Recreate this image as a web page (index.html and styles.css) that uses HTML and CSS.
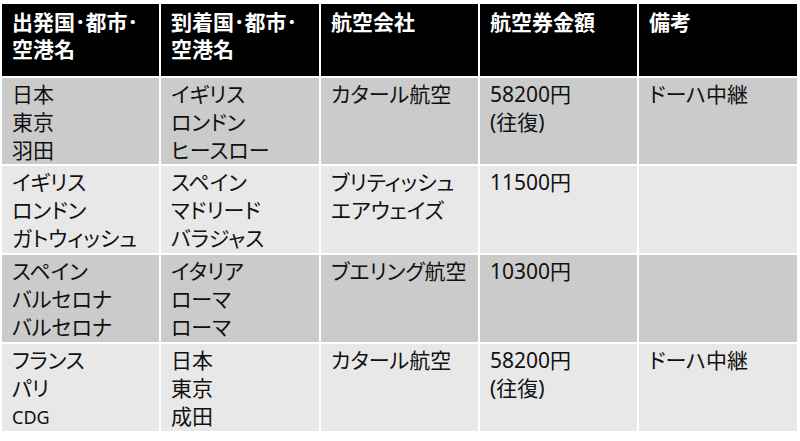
FILE: index.html
```html
<!DOCTYPE html>
<html lang="ja">
<head>
<meta charset="utf-8">
<title>航空券</title>
<link rel="stylesheet" href="styles.css">
</head>
<body>
<table class="fares">
  <thead>
    <tr class="head">
      <th class="c1">出発国･都市･<br>空港名</th>
      <th class="c2">到着国･都市･<br>空港名</th>
      <th class="c3">航空会社</th>
      <th class="c4">航空券金額</th>
      <th class="c5">備考</th>
    </tr>
  </thead>
  <tbody>
    <tr class="dark r1">
      <td>日本<br>東京<br>羽田</td>
      <td>イギリス<br>ロンドン<br>ヒースロー</td>
      <td>カタール航空</td>
      <td>58200円<br>(往復)</td>
      <td>ドーハ中継</td>
    </tr>
    <tr class="light">
      <td>イギリス<br>ロンドン<br>ガトウィッシュ</td>
      <td>スペイン<br>マドリード<br>バラジャス</td>
      <td>ブリティッシュ<br>エアウェイズ</td>
      <td>11500円</td>
      <td></td>
    </tr>
    <tr class="dark">
      <td>スペイン<br>バルセロナ<br>バルセロナ</td>
      <td>イタリア<br>ローマ<br>ローマ</td>
      <td>ブエリング航空</td>
      <td>10300円</td>
      <td></td>
    </tr>
    <tr class="light">
      <td>フランス<br>パリ<br><span class="small">CDG</span></td>
      <td>日本<br>東京<br>成田</td>
      <td>カタール航空</td>
      <td>58200円<br>(往復)</td>
      <td>ドーハ中継</td>
    </tr>
  </tbody>
</table>
</body>
</html>
```
FILE: styles.css
```css
html, body {
  margin: 0;
  padding: 0;
  background: #ffffff;
}

body {
  font-family: "Noto Sans", "Noto Sans CJK JP", sans-serif;
  color: #111111;
}

.fares {
  margin-top: 2px;
  width: 799px;
  table-layout: fixed;
  border-collapse: separate;
  border-spacing: 2px;
  font-feature-settings: "palt";
}

.fares th,
.fares td {
  vertical-align: top;
  text-align: left;
  padding: 2px 8px 0 10px;
  font-size: 21px;
  line-height: 28px;
  box-sizing: border-box;
}

.fares .c1 { width: 157px; }
.fares .c2 { width: 158px; }
.fares .c3 { width: 157px; }
.fares .c4 { width: 157px; }
.fares .c5 { width: 158px; }

.head th {
  background: #000000;
  color: #ffffff;
  font-weight: bold;
  height: 72px;
  padding-top: 5px;
  line-height: 27px;
}

.dark td {
  background: #cbcbcb;
  height: 87px;
}

.r1 td {
  height: 86px;
}

.light td {
  background: #e8e8e8;
  height: 87px;
}

.small {
  font-size: 18px;
}
```
